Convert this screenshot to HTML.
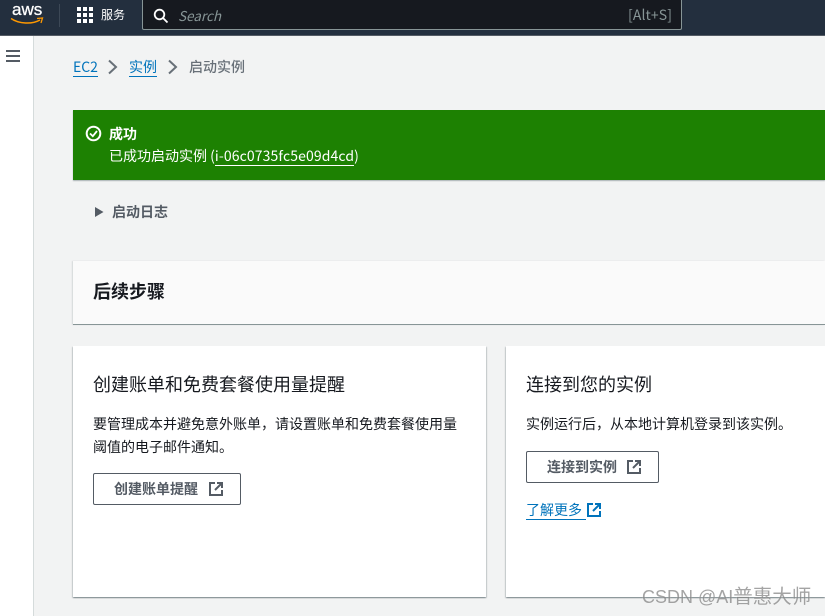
<!DOCTYPE html>
<html lang="zh"><head><meta charset="utf-8">
<style>
html,body{margin:0;padding:0;width:825px;height:616px;overflow:hidden;background:#f2f3f3;position:relative;font-family:"Noto Sans CJK SC",sans-serif;color:#16191f}
.a{position:absolute;white-space:nowrap}
.btn{position:absolute;box-sizing:border-box;background:#fff;border:1px solid #545b64;border-radius:2px}
.card{position:absolute;background:#fff;box-shadow:0 1px 1px 0 rgba(0,28,36,.3),1px 1px 1px 0 rgba(0,28,36,.15),-1px 1px 1px 0 rgba(0,28,36,.15)}
</style></head><body>
<div class="a" style="left:0;top:0;width:825px;height:35px;background:#232f3e;border-bottom:1px solid #545b64"></div>
<div class="a" style="left:12px;top:0;font:400 17px/20px 'Liberation Sans',sans-serif;color:#fff;-webkit-text-stroke:.3px #fff">aws</div>
<svg class="a" style="left:10px;top:17px" width="34" height="9" viewBox="0 0 34 9"><path d="M1 1.500C9 7 22 7.500 30 3" fill="none" stroke="#f90" stroke-width="1.500"/><path d="M27 1.500L32.500 1 31 6" fill="none" stroke="#f90" stroke-width="1.300"/></svg>
<div class="a" style="left:59px;top:4px;width:1px;height:23px;background:#3c4856"></div>
<svg class="a" style="left:77px;top:7px" width="16" height="16" fill="#fff"><rect x="0" y="0" width="4" height="4"/><rect x="6" y="0" width="4" height="4"/><rect x="12" y="0" width="4" height="4"/><rect x="0" y="6" width="4" height="4"/><rect x="6" y="6" width="4" height="4"/><rect x="12" y="6" width="4" height="4"/><rect x="0" y="12" width="4" height="4"/><rect x="6" y="12" width="4" height="4"/><rect x="12" y="12" width="4" height="4"/></svg>
<div class="a" style="left:101px;top:5px;font-size:12px;line-height:20px;color:#fff">服务</div>
<div class="a" style="left:142px;top:0;width:540px;height:30px;box-sizing:border-box;background:#16191f;border:1px solid #879596;border-top:0;border-radius:0 0 2px 2px"></div>
<svg class="a" style="left:153px;top:8px" width="16" height="16" fill="none" stroke="#fff" stroke-width="1.800"><circle cx="6.500" cy="6.500" r="4.800"/><path d="M10 10L14.500 14.500"/></svg>
<div class="a" style="left:178px;top:5px;font-style:italic;font-size:13.500px;line-height:20px;color:#879596">Search</div>
<div class="a" style="left:628px;top:5px;font-size:14px;line-height:20px;letter-spacing:.1px;color:#879596">[Alt+S]</div>

<div class="a" style="left:0;top:36px;width:33px;height:580px;background:#fff;border-right:1px solid #d5dbdb"></div>
<svg class="a" style="left:6px;top:49px" width="15" height="14" fill="#545b64"><rect width="14" height="2" y="1"/><rect width="14" height="2" y="6"/><rect width="14" height="2" y="11"/></svg>

<div class="a" style="left:73px;top:58px;font-size:14px;line-height:18px;color:#0073bb;border-bottom:1px solid #0073bb;height:18px">EC2</div>
<svg class="a" style="left:107px;top:59px" width="12" height="16" fill="none" stroke="#687078" stroke-width="2"><path d="M2 1.500L9 8 2 14.500"/></svg>
<div class="a" style="left:129px;top:58px;font-size:14px;line-height:18px;color:#0073bb;border-bottom:1px solid #0073bb;height:18px">实例</div>
<svg class="a" style="left:167px;top:59px" width="12" height="16" fill="none" stroke="#687078" stroke-width="2"><path d="M2 1.500L9 8 2 14.500"/></svg>
<div class="a" style="left:189px;top:58px;font-size:14px;line-height:18px;color:#687078;font-weight:500">启动实例</div>

<div class="a" style="left:73px;top:110px;width:752px;height:70px;background:#1d8102;box-shadow:0 1px 1px rgba(0,28,36,.3)"></div>
<svg class="a" style="left:85px;top:125px" width="17" height="17" fill="none" stroke="#fff" stroke-width="2"><circle cx="8.500" cy="8.500" r="6.800"/><path d="M5 8.500L7.800 11.200 12 6" stroke-width="1.800"/></svg>
<div class="a" style="left:109px;top:125px;font-size:14px;line-height:18px;font-weight:700;color:#fff">成功</div>
<div class="a" style="left:109px;top:147px;font-size:14px;line-height:18px;color:#fff">已成功启动实例 (<span style="display:inline-block;height:18px;border-bottom:1px solid #fff;box-sizing:content-box;letter-spacing:.12px">i-06c0735fc5e09d4cd</span>)</div>

<svg class="a" style="left:94px;top:206px" width="11" height="12" fill="#545b64"><path d="M1 1L9.500 6 1 11z"/></svg>
<div class="a" style="left:112px;top:203px;font-size:14px;line-height:18px;font-weight:700;color:#545b64">启动日志</div>

<div class="a" style="left:73px;top:261px;width:752px;height:63px;background:#fafafa;border-bottom:1px solid #879596;box-shadow:-1px 0 1px rgba(0,28,36,.12)"></div>
<div class="a" style="left:93px;top:279px;font-size:18px;line-height:24px;font-weight:700;color:#16191f">后续步骤</div>

<div class="card" style="left:73px;top:346px;width:413px;height:251px"></div>
<div class="a" style="left:93px;top:372px;font-size:18px;line-height:24px;color:#16191f">创建账单和免费套餐使用量提醒</div>
<div class="a" style="left:93px;top:413px;font-size:14px;line-height:23px;color:#16191f">要管理成本并避免意外账单，请设置账单和免费套餐使用量<br>阈值的电子邮件通知。</div>
<div class="btn" style="left:93px;top:473px;width:148px;height:32px"></div>
<div class="a" style="left:114px;top:479px;font-size:14px;line-height:20px;font-weight:700;color:#545b64">创建账单提醒</div>
<svg class="a" style="left:209px;top:482px" width="14" height="14" fill="none" stroke="#545b64" stroke-width="2"><path d="M6 1H1V13H13V8M8 1H13V6M13 1L6 8"/></svg>

<div class="card" style="left:506px;top:346px;width:319px;height:251px"></div>
<div class="a" style="left:526px;top:372px;font-size:18px;line-height:24px;color:#16191f">连接到您的实例</div>
<div class="a" style="left:526px;top:413px;font-size:14px;line-height:23px;color:#16191f">实例运行后，从本地计算机登录到该实例。</div>
<div class="btn" style="left:526px;top:451px;width:133px;height:32px"></div>
<div class="a" style="left:547px;top:457px;font-size:14px;line-height:20px;font-weight:700;color:#545b64">连接到实例</div>
<svg class="a" style="left:627px;top:460px" width="14" height="14" fill="none" stroke="#545b64" stroke-width="2"><path d="M6 1H1V13H13V8M8 1H13V6M13 1L6 8"/></svg>
<div class="a" style="left:526px;top:501px;font-size:14px;line-height:18px;height:18px;color:#0073bb;border-bottom:1px solid #0073bb;width:60px">了解更多</div>
<svg class="a" style="left:587px;top:503px" width="14" height="14" fill="none" stroke="#0073bb" stroke-width="2"><path d="M6 1H1V13H13V8M8 1H13V6M13 1L6 8"/></svg>

<div class="a" style="left:642px;top:585px;font-size:18px;line-height:24px;color:rgba(90,90,90,.55);font-family:'Liberation Sans','Noto Sans CJK SC',sans-serif;text-shadow:0 0 1px rgba(255,255,255,.6)">CSDN @AI<span style="font-size:19.500px">普惠大师</span></div>
</body></html>
